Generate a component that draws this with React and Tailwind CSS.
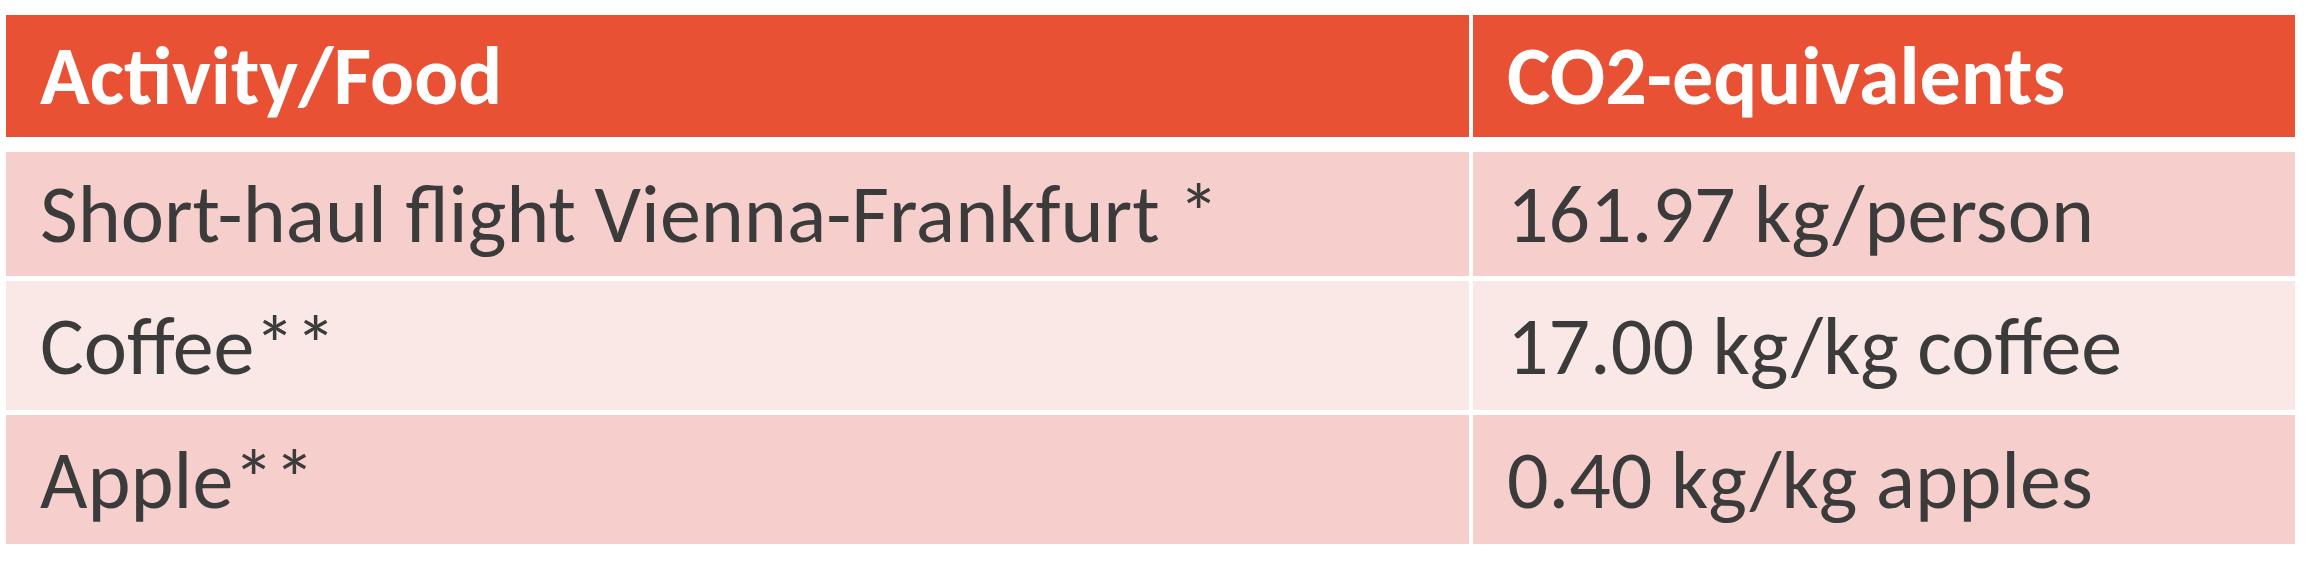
import React from "react";

const rows = [
  { a: "Short-haul flight Vienna-Frankfurt *", b: "161.97 kg/person", bg: "bg-[#f6cfcd]", h: "h-[124px]" },
  { a: "Coffee**", b: "17.00 kg/kg coffee", bg: "bg-[#fae8e6]", h: "h-[129px]" },
  { a: "Apple**", b: "0.40 kg/kg apples", bg: "bg-[#f6cfcd]", h: "h-[129px]" },
];

export default function App() {
  return (
    <div className="w-[2310px] h-[586px] bg-white pt-[15px] pl-[6px] font-['Carlito','Lato','Liberation_Sans',sans-serif]">
      <div className="w-[2289px] flex flex-col">
        <div className="grid grid-cols-[1463px_822px] gap-x-[4px] h-[122px] mb-[15px]">
          <div className="bg-[#e95135] flex items-center pl-[34px] text-white font-bold text-[82px] leading-none">
            Activity/Food
          </div>
          <div className="bg-[#e95135] flex items-center pl-[34px] text-white font-bold text-[82px] leading-none">
            CO2-equivalents
          </div>
        </div>
        <div className="flex flex-col gap-[5px]">
          {rows.map((r, i) => (
            <div key={i} className={`grid grid-cols-[1463px_822px] gap-x-[4px] ${r.h}`}>
              <div className={`${r.bg} flex items-center pl-[34px] text-[#3b3b3b] text-[82px] leading-none`}>
                {r.a}
              </div>
              <div className={`${r.bg} flex items-center pl-[34px] text-[#3b3b3b] text-[82px] leading-none`}>
                {r.b}
              </div>
            </div>
          ))}
        </div>
      </div>
    </div>
  );
}
